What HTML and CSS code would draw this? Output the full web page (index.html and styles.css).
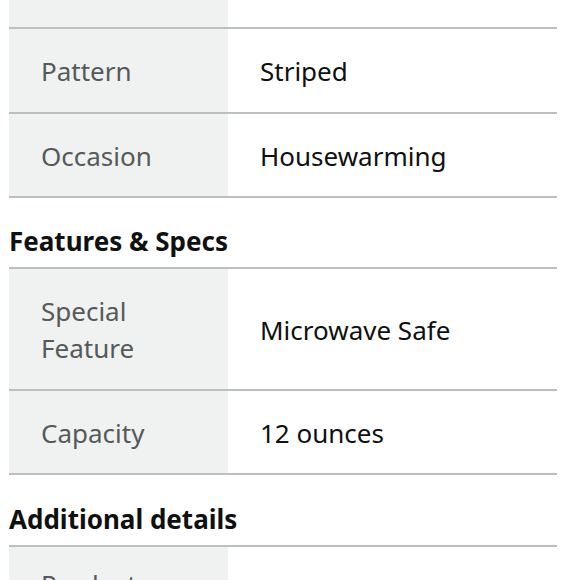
FILE: index.html
```html
<!DOCTYPE html>
<html>
<head>
<meta charset="utf-8">
<link rel="stylesheet" href="styles.css">
</head>
<body>
<div class="page">
  <div class="table">
    <div class="row partial"><div class="label"></div><div class="value"></div></div>
    <div class="row"><div class="label">Pattern</div><div class="value">Striped</div></div>
    <div class="row"><div class="label">Occasion</div><div class="value">Housewarming</div></div>
  </div>
  <h2 class="heading">Features &amp; Specs</h2>
  <div class="table bordered">
    <div class="row"><div class="label">Special Feature</div><div class="value">Microwave Safe</div></div>
    <div class="row"><div class="label">Capacity</div><div class="value">12 ounces</div></div>
  </div>
  <h2 class="heading last">Additional details</h2>
  <div class="table bordered">
    <div class="row tall"><div class="label">Product Dimensions</div><div class="value"></div></div>
  </div>
</div>
</body>
</html>
```
FILE: styles.css
```css
* {
  box-sizing: border-box;
}
html, body {
  margin: 0;
  padding: 0;
  background: #fff;
}
body {
  font-family: "Noto Sans", "Open Sans", sans-serif;
  font-size: 26px;
  line-height: 37px;
  color: #0f1111;
}
.page {
  width: 557px;
  padding-left: 9px;
  height: 580px;
  overflow: hidden;
}
.table.bordered {
  border-top: 2px solid #bbbfbf;
}
.row {
  display: grid;
  grid-template-columns: 219px 1fr;
  border-bottom: 2px solid #bbbfbf;
}
.label {
  background: #f0f2f2;
  color: #565959;
  padding: 24px 32px 21.5px 32px;
}
.value {
  display: flex;
  align-items: center;
  padding: 24px 32px 21.5px 32px;
}
.row.partial .label,
.row.partial .value {
  height: 27px;
  padding: 0;
}
.row.tall .label {
  padding-top: 19px;
}
.heading {
  margin: 0;
  font-size: 26px;
  font-weight: 700;
  line-height: 37px;
  padding: 25px 0 7px 0;
  color: #0f1111;
}
.heading.last {
  padding-top: 26px;
}
```
